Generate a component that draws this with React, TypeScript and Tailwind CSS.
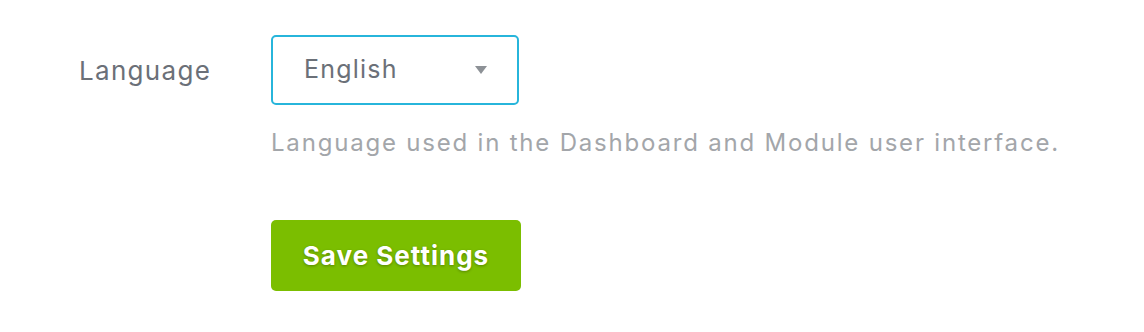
export default function App() {
  return (
    <div className="w-[1144px] h-[332px] bg-white pt-[35px] font-['Inter',sans-serif]">
      <div className="flex">
        <div className="w-[271px] pl-[79px] h-[70px] flex items-center text-[26px] text-[#6b7078] tracking-[1.3px]">
          Language
        </div>
        <div className="flex flex-col">
          <div className="w-[248px] h-[70px] border-2 border-[#27b5db] rounded-[5px] flex items-center justify-between pl-[31px] pr-[30px]">
            <span className="text-[25px] text-[#6b7078] tracking-[1.2px]">English</span>
            <span className="w-0 h-0 border-l-[6px] border-r-[6px] border-t-[8px] border-l-transparent border-r-transparent border-t-[#8d9196]"></span>
          </div>
          <p className="mt-[22px] h-[32px] leading-[32px] text-[24px] text-[#a3a6aa] tracking-[1.8px]">
            Language used in the Dashboard and Module user interface.
          </p>
          <button className="mt-[61px] w-[250px] h-[71px] bg-[#7bbe00] rounded-[5px] text-white text-[26px] font-bold tracking-[1px] [text-shadow:0_1px_3px_rgba(0,0,0,0.3)]">
            Save Settings
          </button>
        </div>
      </div>
    </div>
  );
}
